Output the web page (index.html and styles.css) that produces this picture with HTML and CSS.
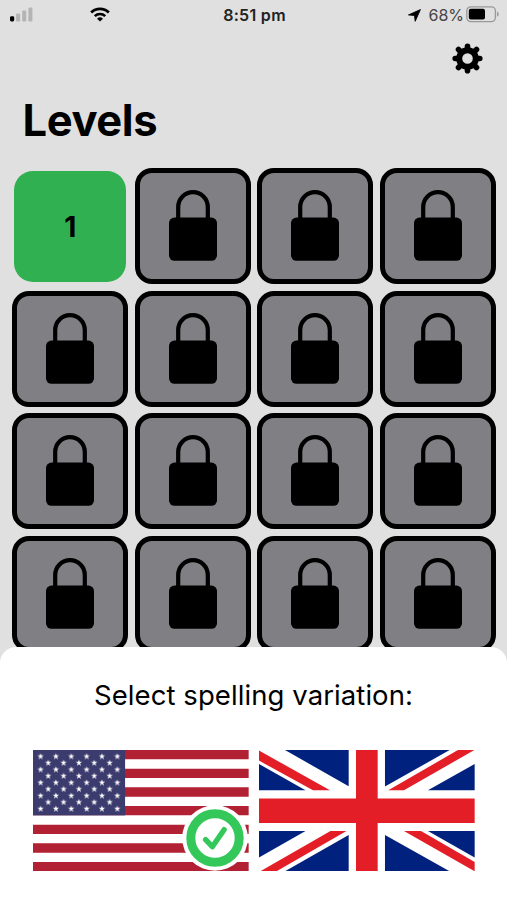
FILE: index.html
```html
<!DOCTYPE html>
<html lang="en">
<head>
    <meta charset="UTF-8">
    <meta name="viewport" content="width=device-width, initial-scale=1.0">
    <title>Levels</title>
    <link rel="stylesheet" href="styles.css">
</head>
<body>
    <svg class="defs" width="0" height="0">
        <symbol id="lock" viewBox="0 0 48 71">
            <path d="M9.2 30V17a14.8 14.8 0 0 1 29.6 0v13" fill="none" stroke="#000" stroke-width="4.2"/>
            <rect x="0" y="27.6" width="48" height="43.2" rx="5.5"/>
        </symbol>
    </svg>

    <div class="app">
        <header class="status-bar">
            <div class="status-left">
                <svg class="signal" width="23" height="15" viewBox="0 0 23 15">
                    <rect x="0" y="9.2" width="4.2" height="5.3" rx="1.4"/>
                    <rect x="6.1" y="6.6" width="4" height="7.9" rx="1.2" fill="#b4b4b4"/>
                    <rect x="12.2" y="3.6" width="4" height="10.9" rx="1.2" fill="#b4b4b4"/>
                    <rect x="18.4" y="0.6" width="4" height="13.9" rx="1.2" fill="#b4b4b4"/>
                </svg>
                <svg class="wifi" width="20" height="15" viewBox="0 0 20 15" fill="none" stroke="#000">
                    <path d="M1.2 5.5a12.6 12.6 0 0 1 17.6 0" stroke-width="2.9"/>
                    <path d="M4.8 9.1a7.5 7.5 0 0 1 10.4 0" stroke-width="2.7"/>
                    <path d="M10 14.6L7 11.7a4.4 4.4 0 0 1 6 0z" fill="#000" stroke="none"/>
                </svg>
            </div>
            <span class="time">8:51 pm</span>
            <div class="status-right">
                <svg width="13" height="13" viewBox="0 0 13 13">
                    <path d="M12.4.6L7.2 12.3 6.5 6.5.5 5.9z" stroke="#000" stroke-width=".9" stroke-linejoin="round"/>
                </svg>
                <span class="percent">68%</span>
                <svg class="battery" width="33" height="17" viewBox="0 0 33 17">
                    <rect x=".8" y=".8" width="28.6" height="14.8" rx="4" fill="none" stroke="#999" stroke-width="1.3"/>
                    <rect x="2.8" y="2.8" width="16.2" height="10.8" rx="2"/>
                    <path d="M31 5.6q1.7.8 1.7 2.6T31 10.8z" fill="#999"/>
                </svg>
            </div>
        </header>

        <div class="toolbar">
            <svg width="31" height="31" viewBox="-15.5 -15.5 31 31">
                <circle r="8.3" fill="none" stroke="#000" stroke-width="6"/>
                <g stroke="#000" stroke-width="5.6" stroke-linecap="round">
                    <path d="M0-9.5V-12.3M0 9.5V12.3M-9.5 0H-12.3M9.5 0H12.3"/>
                    <path d="M-6.8-6.8L-9-9M6.8 6.8L9 9M-6.8 6.8L-9 9M6.8-6.8L9-9"/>
                </g>
            </svg>
        </div>

        <h1>Levels</h1>

        <main class="levels">
            <div class="level open"><span>1</span></div>
            <div class="level locked"><svg><use href="#lock"/></svg></div>
            <div class="level locked"><svg><use href="#lock"/></svg></div>
            <div class="level locked"><svg><use href="#lock"/></svg></div>
            <div class="level locked"><svg><use href="#lock"/></svg></div>
            <div class="level locked"><svg><use href="#lock"/></svg></div>
            <div class="level locked"><svg><use href="#lock"/></svg></div>
            <div class="level locked"><svg><use href="#lock"/></svg></div>
            <div class="level locked"><svg><use href="#lock"/></svg></div>
            <div class="level locked"><svg><use href="#lock"/></svg></div>
            <div class="level locked"><svg><use href="#lock"/></svg></div>
            <div class="level locked"><svg><use href="#lock"/></svg></div>
            <div class="level locked"><svg><use href="#lock"/></svg></div>
            <div class="level locked"><svg><use href="#lock"/></svg></div>
            <div class="level locked"><svg><use href="#lock"/></svg></div>
            <div class="level locked"><svg><use href="#lock"/></svg></div>
        </main>

        <section class="sheet">
            <h2>Select spelling variation:</h2>
            <div class="flags">
                <div class="flag">
                    <svg viewBox="0 0 215.7 121.3">
                        <defs>
                            <path id="star" d="M0-3.3L.8-1.1H3.2L1.2.4 2 2.8 0 1.3-2 2.8-1.2.4-3.2-1.1H-.8z" fill="#fff"/>
                            <pattern id="stars" width="15.35" height="13.1" patternUnits="userSpaceOnUse">
                                <use href="#star" x="7.6" y="6.5"/>
                            </pattern>
                            <pattern id="stars-inner" x="7.65" y="6.5" width="15.35" height="13.1" patternUnits="userSpaceOnUse">
                                <use href="#star" x="7.6" y="6.5"/>
                            </pattern>
                        </defs>
                        <rect width="215.7" height="121.3" fill="#fff"/>
                        <path d="M0 4.67H215.7M0 23.33H215.7M0 42H215.7M0 60.66H215.7M0 79.32H215.7M0 97.98H215.7M0 116.64H215.7" stroke="#b22033" stroke-width="9.33"/>
                        <rect width="92.1" height="65.4" fill="#3c3b6e"/>
                        <rect width="92.1" height="65.4" fill="url(#stars)"/>
                        <rect x="7.65" y="6.5" width="76.75" height="52.4" fill="url(#stars-inner)"/>
                    </svg>
                    <svg class="check" viewBox="-33 -33 66 66">
                        <circle r="32.8" fill="#fff"/>
                        <circle r="24.2" fill="none" stroke="#34c759" stroke-width="9"/>
                        <path d="M-9.4 1.7L-2.7 8.7 9.1-8.3" fill="none" stroke="#34c759" stroke-width="5.4" stroke-linecap="round" stroke-linejoin="round"/>
                    </svg>
                </div>
                <div class="flag">
                    <svg viewBox="0 0 215.7 121.3">
                        <rect width="215.7" height="121.3" fill="#fff"/>
                        <path d="M26 0H89.7V36.3zM0 14V40.3H46.5zM126 0H190.7L126 36.5zM215.7 14V40.3H169zM0 81H46.5L0 107.5zM26 121.3H89.7V85zM126 121.3H190.7L126 85zM215.7 81H169L215.7 107.5z" fill="#00217d"/>
                        <path d="M0 .5L71 40.3H54L0 10.6zM199 0H215.4L145 40.3H129.3zM1.3 121.3H17.5L87.5 81H71.5zM145 81H162L215.7 112V121.3z" fill="#e41e26"/>
                        <path d="M97 0H118.7V48.5H215.7V73H118.7V121.3H97V73H0V48.5H97z" fill="#e41e26"/>
                    </svg>
                </div>
            </div>
        </section>
    </div>
</body>
</html>
```
FILE: styles.css
```css
* {
    box-sizing: border-box;
}

body {
    margin: 0;
    font-family: Inter, "Liberation Sans", sans-serif;
    color: #000;
}

svg {
    display: block;
}

.defs {
    position: absolute;
}

.app {
    position: relative;
    width: 507px;
    height: 900px;
    overflow: hidden;
    background: #e0e0e0;
}

.status-bar {
    display: grid;
    grid-template-columns: 1fr auto 1fr;
    align-items: center;
    height: 30px;
    padding: 0 8px 0 10px;
}

.status-left {
    display: flex;
    align-items: center;
    gap: 57px;
    padding-bottom: 2px;
}

.status-right {
    display: flex;
    align-items: center;
    justify-content: flex-end;
}

.time {
    font-size: 16px;
    font-weight: 600;
    letter-spacing: 0.3px;
    color: #222;
}

.percent {
    margin: 0 2px 0 7px;
    font-size: 16px;
    color: #444;
}

.battery {
    margin-bottom: 2px;
}

.toolbar {
    display: flex;
    justify-content: flex-end;
    height: 60px;
    padding: 12.5px 24px 0;
}

h1 {
    margin: 0;
    height: 78.2px;
    padding-left: 22.5px;
    font-size: 43.5px;
    line-height: 60px;
    font-weight: 700;
    letter-spacing: -0.4px;
}

.levels {
    display: grid;
    grid-template-columns: repeat(4, 116px);
    grid-auto-rows: 116px;
    gap: 6.6px;
    padding-left: 12.2px;
}

.level {
    display: flex;
    justify-content: center;
}

.level.open {
    align-items: center;
    margin: 2.6px 2px 1.8px 2.2px;
    border-radius: 19px;
    background: #30b050;
    font-size: 28px;
    font-weight: 700;
}

.level.locked {
    padding-top: 17px;
    border: 5px solid #000;
    border-radius: 17px;
    background: #807f84;
}

.level.locked svg {
    width: 48px;
    height: 71px;
}

.sheet {
    position: absolute;
    left: 0;
    right: 0;
    bottom: 0;
    height: 253px;
    border-radius: 16px 16px 0 0;
    background: #fff;
}

h2 {
    margin: 0;
    padding-top: 28px;
    height: 103px;
    font-size: 27.5px;
    line-height: 41px;
    font-weight: 400;
    letter-spacing: 0.08px;
    text-align: center;
}

.flags {
    display: flex;
    gap: 10.7px;
    padding-left: 33px;
}

.flag {
    position: relative;
    width: 215.7px;
    height: 121.3px;
}

/* sits over the corner of the selected flag */
.check {
    position: absolute;
    right: 0.4px;
    bottom: 0;
    width: 66px;
    height: 66px;
}
```
